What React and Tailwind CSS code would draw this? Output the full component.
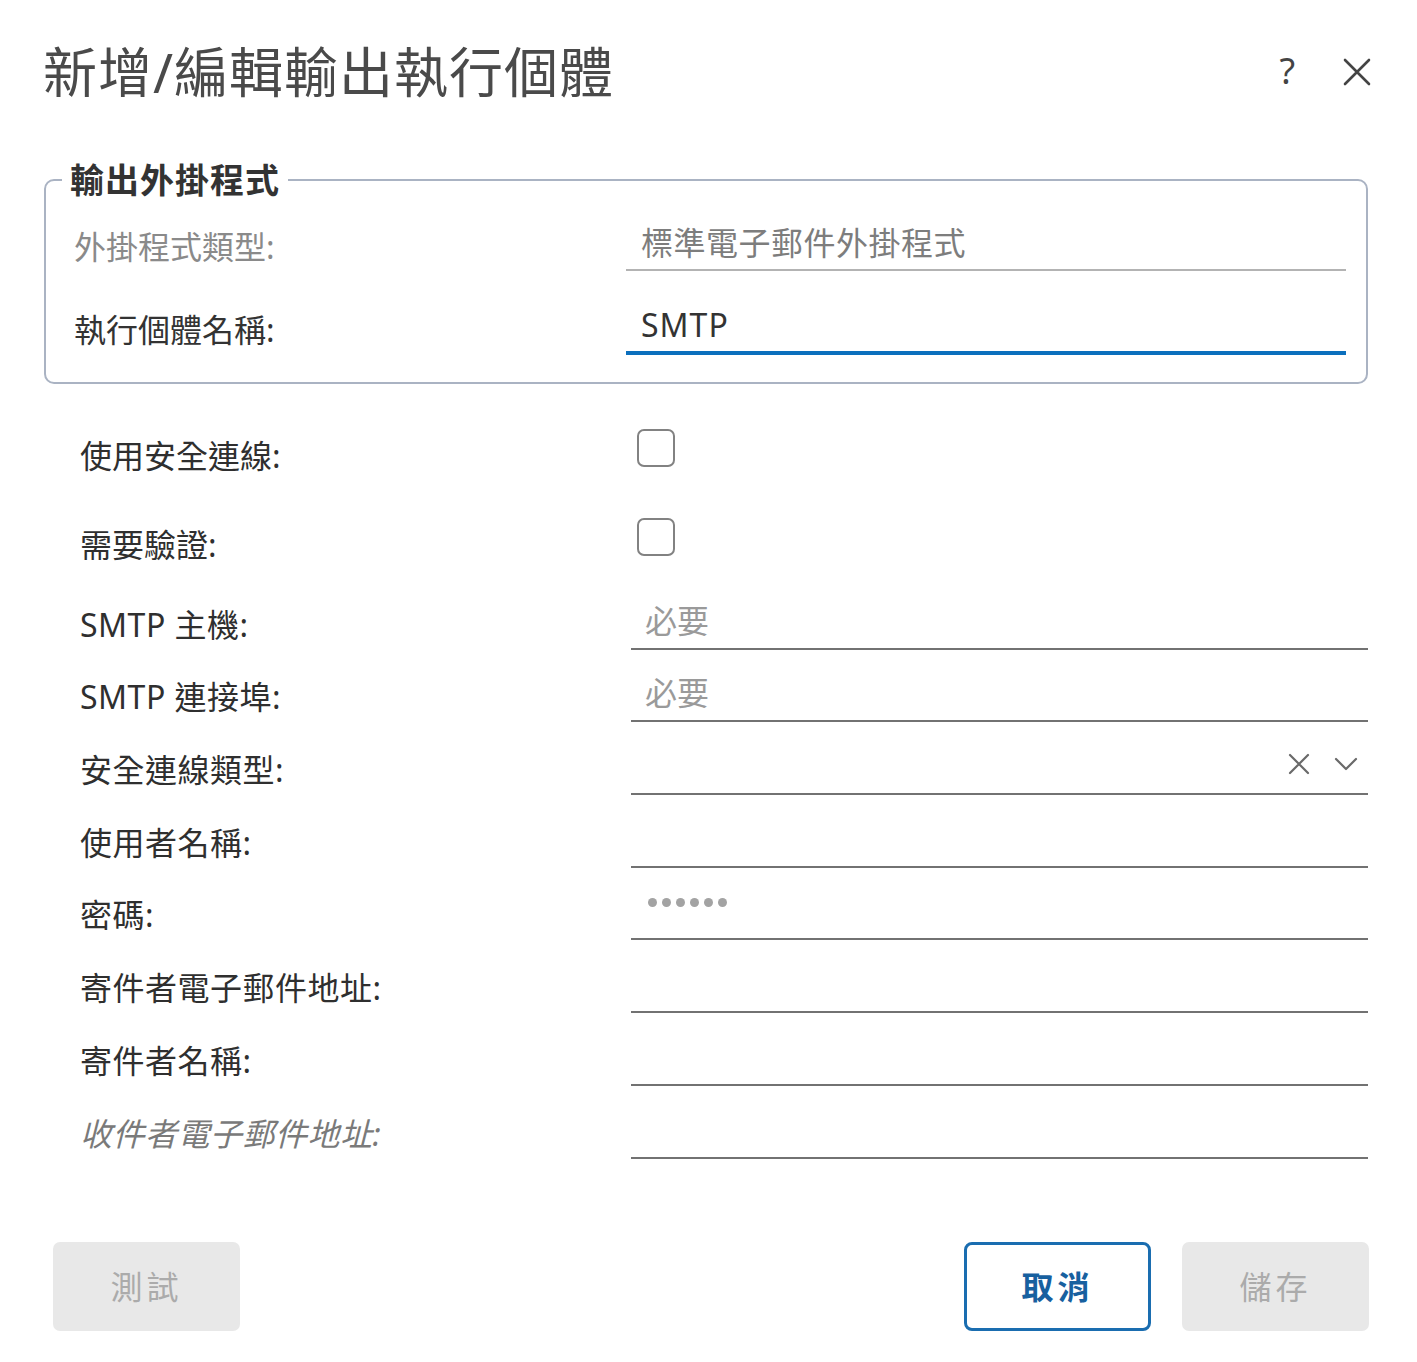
import React from "react";

const rows = [
  { label: "SMTP 主機:", kind: "placeholder", mt: "mt-[27px]" },
  { label: "SMTP 連接埠:", kind: "placeholder", mt: "mt-[22px]" },
  { label: "安全連線類型:", kind: "select", mt: "mt-[23px]" },
  { label: "使用者名稱:", kind: "empty", mt: "mt-[23px]" },
  { label: "密碼:", kind: "password", mt: "mt-[22px]" },
  { label: "寄件者電子郵件地址:", kind: "empty", mt: "mt-[23px]" },
  { label: "寄件者名稱:", kind: "empty", mt: "mt-[23px]" },
  { label: "收件者電子郵件地址:", kind: "empty", mt: "mt-[23px]", italic: true },
];

function Field({ kind }) {
  return (
    <div className="flex-1 h-[50px] border-b-2 border-[#727272] pl-[14px] pr-[10px] pb-[6px] flex items-center">
      {kind === "placeholder" && (
        <span className="text-[32px] leading-[40px] text-[#9a9a9a]">必要</span>
      )}
      {kind === "password" && (
        <div className="flex items-center gap-[5px] ml-[3px] mb-[18px]">
          {[0, 1, 2, 3, 4, 5].map((i) => (
            <span key={i} className="w-[9px] h-[9px] rounded-full bg-[#a3a3a3]" />
          ))}
        </div>
      )}
      {kind === "select" && (
        <div className="ml-auto flex items-center gap-[24px] mb-[4px]">
          <svg width="22" height="22" viewBox="0 0 22 22" fill="none">
            <path d="M2 2 L20 20 M20 2 L2 20" stroke="#6a6a6a" strokeWidth="2.2" strokeLinecap="round" />
          </svg>
          <svg width="24" height="14" viewBox="0 0 24 14" fill="none">
            <path d="M2 2 L12 12 L22 2" stroke="#6a6a6a" strokeWidth="2.2" strokeLinecap="round" strokeLinejoin="round" />
          </svg>
        </div>
      )}
    </div>
  );
}

export default function App() {
  return (
    <div className="w-[1417px] h-[1362px] bg-white font-['Noto_Sans','Noto_Sans_CJK_TC',sans-serif] text-[#2f2f2f] overflow-hidden">
      {/* Header */}
      <div className="flex items-start justify-between pl-[43px] pr-[46px] pt-[40px] h-[160px]">
        <h1 className="text-[54px] leading-[64px] font-normal tracking-[1px] text-[#4a4a4a]">新增/編輯輸出執行個體</h1>
        <div className="flex items-center gap-[48px] h-[64px]">
          <span className="text-[36px] leading-[40px] text-[#444] -mt-[2px]">?</span>
          <svg width="28" height="28" viewBox="0 0 28 28" fill="none">
            <path d="M2 2 L26 26 M26 2 L2 26" stroke="#444" strokeWidth="2.6" strokeLinecap="round" />
          </svg>
        </div>
      </div>

      {/* Fieldset */}
      <fieldset className="ml-[44px] mr-[49px] border-2 border-[#aab3c3] rounded-[10px] pl-[16px] pr-[20px] pt-[22px] pb-[27px]">
        <legend className="px-[8px] text-[34px] leading-[40px] font-bold tracking-[1px] text-[#333]">輸出外掛程式</legend>
        <div className="grid grid-cols-[564px_1fr] items-center h-[49px]">
          <span className="pl-[12px] text-[32px] leading-[40px] text-[#8a8a8a]">外掛程式類型:</span>
          <div className="h-[49px] border-b-2 border-[#b3b3b3] pl-[15px] pb-[6px] flex items-center">
            <span className="text-[32px] leading-[40px] tracking-[0.5px] text-[#7d7d7d]">標準電子郵件外掛程式</span>
          </div>
        </div>
        <div className="grid grid-cols-[564px_1fr] items-center h-[50px] mt-[34px]">
          <span className="pl-[12px] text-[32px] leading-[40px] text-[#333]">執行個體名稱:</span>
          <div className="h-[50px] border-b-4 border-[#0b6fbd] pl-[15px] pb-[6px] flex items-center">
            <span className="text-[32px] leading-[40px] tracking-[1px] text-[#333]">SMTP</span>
          </div>
        </div>
      </fieldset>

      {/* Lower form */}
      <div className="pl-[80px] pr-[49px]">
        <div className="flex items-center h-[56px] mt-[44px]">
          <span className="w-[551px] text-[32px] leading-[40px]">使用安全連線:</span>
          <span className="ml-[6px] mb-[16px] w-[38px] h-[38px] border-2 border-[#828282] rounded-[7px] bg-white" />
        </div>
        <div className="flex items-center h-[56px] mt-[33px]">
          <span className="w-[551px] text-[32px] leading-[40px]">需要驗證:</span>
          <span className="ml-[6px] mb-[16px] w-[38px] h-[38px] border-2 border-[#828282] rounded-[7px] bg-white" />
        </div>
        {rows.map((r) => (
          <div key={r.label} className={`flex items-center h-[50px] ${r.mt}`}>
            <span
              className={
                r.italic
                  ? "w-[551px] text-[32px] leading-[40px] tracking-[0.5px] italic text-[#7a7a7a]"
                  : "w-[551px] text-[32px] leading-[40px] tracking-[0.5px]"
              }
            >
              {r.label}
            </span>
            <Field kind={r.kind} />
          </div>
        ))}
      </div>

      {/* Buttons */}
      <div className="flex items-center justify-between pl-[53px] pr-[48px] mt-[83px]">
        <button className="w-[187px] h-[89px] rounded-[7px] bg-[#e8e8e8] text-[32px] text-[#ababab] tracking-[4px]">測試</button>
        <div className="flex items-center gap-[31px]">
          <button className="w-[187px] h-[89px] rounded-[8px] border-[3px] border-[#1a6db0] bg-white text-[32px] font-bold text-[#17609f] tracking-[4px]">取消</button>
          <button className="w-[187px] h-[89px] rounded-[7px] bg-[#e8e8e8] text-[32px] text-[#ababab] tracking-[4px]">儲存</button>
        </div>
      </div>
    </div>
  );
}
